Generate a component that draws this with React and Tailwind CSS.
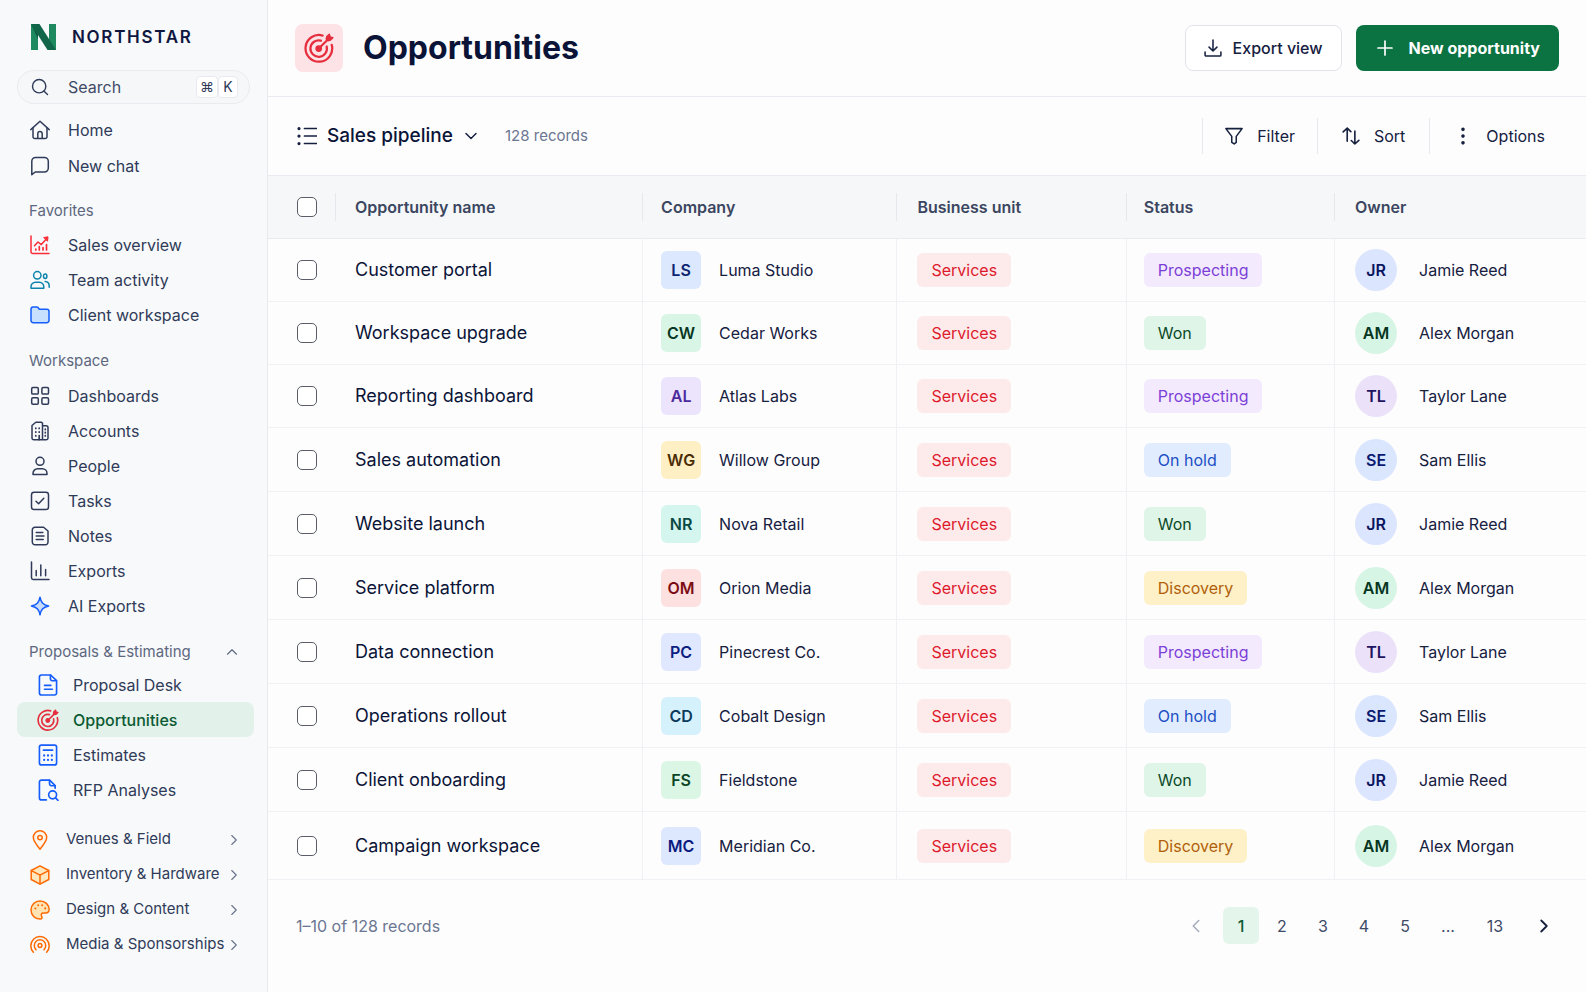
import { useState } from 'react';
import { ChevronDown, ChevronLeft, ChevronRight, ChevronUp, Plus, Search } from 'lucide-react';

const Icon = ({ size = 20, className = '', children }) => (
  <svg
    width={size}
    height={size}
    viewBox="0 0 20 20"
    fill="none"
    stroke="currentColor"
    strokeWidth="1.5"
    strokeLinecap="round"
    strokeLinejoin="round"
    className={`shrink-0 ${className}`}
    aria-hidden="true"
  >
    {children}
  </svg>
);

const HomeIcon = () => (
  <Icon>
    <path d="M.8 9.600 10 1.200l9.200 8.400" />
    <path d="M3 8v8.700a1.800 1.800 0 0 0 1.800 1.800h10.400a1.800 1.800 0 0 0 1.800-1.800V8" />
    <path d="M7.800 18.300v-4.600a2.200 2.200 0 0 1 4.400 0v4.600" />
  </Icon>
);

const ChatIcon = () => (
  <Icon>
    <path d="M5.600 1.400h8.800a3.900 3.900 0 0 1 3.900 3.900v6.800a3.900 3.900 0 0 1-3.900 3.900H5.200l-3.400 2.700V5.300a3.900 3.900 0 0 1 3.800-3.900z" />
  </Icon>
);

const SalesIcon = () => (
  <Icon className="text-red-500">
    <path d="M1 1v15.700a1.800 1.800 0 0 0 1.800 1.800H19" />
    <path d="M4.500 10.800 8 7l3.300 2.600 5.500-6" />
    <path d="M14 2.500 18 1.800 17.600 5.800z" fill="currentColor" strokeWidth="1" />
    <path d="M5.800 15v-1M9.300 15v-3.500M13 15v-2.500M16.500 15V9.500" strokeWidth="1.700" />
  </Icon>
);

const TeamIcon = () => (
  <Icon className="text-[#0e84ad]">
    <circle cx="7.300" cy="5.300" r="3.700" />
    <path d="M1 18.200v-1.500a4.500 4.500 0 0 1 4.500-4.500h3.800a4.500 4.500 0 0 1 4.500 4.500v1.500z" />
    <ellipse cx="15.200" cy="6.300" rx="1.700" ry="2.200" />
    <path d="M15.200 11.500c2.500.3 4 1.900 4 4.300v1.400" />
  </Icon>
);

const FolderIcon = () => (
  <Icon className="text-blue-600">
    <path d="M1 4.200a2.200 2.200 0 0 1 2.200-2.200h3.500c.8 0 1.300.4 1.700 1l.9 1.300h7.500A2.200 2.200 0 0 1 19 6.500v9a2.200 2.200 0 0 1-2.200 2.200H3.200A2.200 2.200 0 0 1 1 15.500z" fill="#c7e0fe" />
  </Icon>
);

const GridIcon = () => (
  <Icon>
    <rect x="1.700" y="1.500" width="6.600" height="6.600" rx="1.200" />
    <rect x="11.900" y="1.500" width="6.600" height="6.600" rx="1.200" />
    <rect x="1.700" y="11.700" width="6.600" height="6.600" rx="1.200" />
    <rect x="11.900" y="11.700" width="6.600" height="6.600" rx="1.200" />
  </Icon>
);

const BuildingIcon = () => (
  <Icon>
    <path d="M12.500 18.700V2.200l-1.300-1H5.800L2 4.500v12.400a1.800 1.800 0 0 0 1.800 1.800h12.400a1.800 1.800 0 0 0 1.800-1.800V6.700a2 2 0 0 0-2-2h-3.500" />
    <path d="M5.800 7v.4M9.200 7v.4M5.800 10.800v.4M9.200 10.800v.4M5.800 14.600v.4M9.200 14.600v4M15.300 8.200v.4M15.300 11.400v.4M15.300 14.600v.4" strokeWidth="1.700" />
  </Icon>
);

const PersonIcon = () => (
  <Icon>
    <circle cx="10" cy="5.300" r="4" />
    <path d="M3 18.600v-1.200a4.600 4.600 0 0 1 4.600-4.600h4.800a4.600 4.600 0 0 1 4.600 4.600v1.200z" />
  </Icon>
);

const TaskIcon = () => (
  <Icon>
    <rect x="1.500" y="1.200" width="17" height="17.400" rx="2.600" />
    <path d="m6 10.200 2.600 2.600 5.200-5.600" />
  </Icon>
);

const NoteIcon = () => (
  <Icon>
    <path d="M5 1.200h8.600L18 5v11a2.600 2.600 0 0 1-2.600 2.700H5A2.700 2.700 0 0 1 2.300 16V3.900A2.700 2.700 0 0 1 5 1.200z" />
    <path d="M6.200 6.600h6.600M6.200 10h7.800M6.200 13.500h7" />
  </Icon>
);

const BarsIcon = () => (
  <Icon>
    <path d="M1.500 1v15.800a1.600 1.600 0 0 0 1.600 1.600H19" />
    <path d="M6.200 14.800V9.500M10.800 14.800V4M15.600 14.800V8.500" />
  </Icon>
);

const SparkIcon = () => (
  <Icon className="text-blue-600">
    <path d="M10 1.200c.9 5 2.800 7.400 8.600 8.800-5.800 1.400-7.700 3.800-8.600 8.800-.9-5-2.800-7.400-8.600-8.800 5.800-1.400 7.700-3.800 8.600-8.800z" fill="#c7dcfe" />
  </Icon>
);

const ProposalIcon = () => (
  <Icon size={22} className="text-blue-600">
    <path d="M4 .9h8.400L17.800 6v11.300a1.800 1.800 0 0 1-1.800 1.800H4a1.800 1.800 0 0 1-1.800-1.800V2.700A1.800 1.800 0 0 1 4 .9z" />
    <path d="M12.200 1v3.400a1.700 1.700 0 0 0 1.700 1.700h3.700" />
    <path d="M6.800 10.400h5.800M6.800 13.900h7.200" />
  </Icon>
);

const TargetIcon = ({ size = 20 }) => (
  <Icon size={size} className="text-[#e62e3e]">
    <path d="M12.400 1.700a8.900 8.900 0 1 0 6.100 6.200" />
    <path d="M11.300 5.100a5.500 5.500 0 1 0 3.800 3.900" />
    <circle cx="9.800" cy="10.400" r="1.500" fill="currentColor" />
    <path d="M10 10.200 15.800 4.500" />
    <path d="m14.800 4 .4-1.600L16.900.9l.5 1.700 1.800.5-1.500 1.600-1.600.4z" fill="currentColor" strokeWidth="1" />
  </Icon>
);

const CalculatorIcon = () => (
  <Icon size={22} className="text-blue-600">
    <rect x="2.200" y="1" width="15.600" height="18" rx="1.800" />
    <path d="M5.800 5.600h8.400" />
    <path d="M6.500 10.300v.2M10 10.300v.2M13.500 10.300v.2M6.500 14.300v.2M10 14.300v.2M13.500 14.300v.2" strokeWidth="2" />
  </Icon>
);

const FileSearchIcon = () => (
  <Icon size={22} className="text-blue-600">
    <path d="M8.500 19H4a1.800 1.800 0 0 1-1.800-1.800V2.800A1.800 1.800 0 0 1 4 1h7.500l5 5v2.500" />
    <path d="M11.400 1.200v3.200a1.700 1.700 0 0 0 1.700 1.700h3.200" />
    <circle cx="14.200" cy="14.400" r="3.600" />
    <path d="m16.900 17.200 2.200 2.200" />
  </Icon>
);

const PinIcon = () => (
  <Icon className="text-orange-500">
    <path d="M10 19.200C5.800 14 3.300 10.700 3.300 7.500a6.700 6.700 0 0 1 13.400 0c0 3.200-2.500 6.500-6.700 11.700z" fill="#fff7ed" />
    <circle cx="10" cy="7.600" r="2.200" />
  </Icon>
);

const BoxIcon = () => (
  <Icon className="text-orange-500">
    <path d="m10 .9 8.800 4.600v9L10 19.100l-8.800-4.600v-9z" fill="#ffe7bf" />
    <path d="m1.400 5.600 8.600 4.500 8.600-4.500M10 10.100v8.800" />
  </Icon>
);

const PaletteIcon = () => (
  <Icon className="text-orange-500">
    <path d="M10 .9C5 .9 1 5 1 10s4 9.100 9 9.100c2.600 0 2.300-2 1.600-3-.9-1.500 0-3.200 1.800-3.200h2.300c2 0 3.400-1.400 3.400-3.400C19.100 4.600 15 .9 10 .9z" fill="#ffe3b3" />
    <path d="M5.400 8.500v.1M8.200 5.200v.1M12.200 5.200v.1M15.200 8.300v.1" strokeWidth="2" />
  </Icon>
);

const MediaIcon = () => (
  <Icon className="text-orange-500">
    <path d="M3.400 17.200a9.200 9.200 0 1 1 13.200 0" />
    <path d="M6 14.600a5.700 5.700 0 1 1 8 0" />
    <circle cx="10" cy="10.500" r="1.900" />
  </Icon>
);

const ExportIcon = () => (
  <Icon size={18}>
    <path d="M10 1v12M5.600 9 10 13.300 14.400 9M1.200 14.500v3.200A1.200 1.200 0 0 0 2.400 18.900h15.200a1.200 1.200 0 0 0 1.200-1.200v-3.200" strokeWidth="1.700" />
  </Icon>
);

const FilterIcon = () => (
  <Icon size={18}>
    <path d="M1 1.800h18l-6.500 8.600v6.600l-2.300 1.800-2.700-1.800v-6.600z" strokeWidth="1.700" />
  </Icon>
);

const SortIcon = () => (
  <Icon size={18}>
    <path d="M5.800 15.800V1.400M1.300 5.400l4.500-4.200 4 4M14.300 4.600v14.200M10.300 15l4 3.900 4.400-4" strokeWidth="1.800" />
  </Icon>
);

const DotsIcon = () => (
  <Icon size={18}>
    <path d="M10 2.500v.1M10 10v.1M10 17.500v.1" strokeWidth="4" />
  </Icon>
);

const ListIcon = () => (
  <Icon>
    <path d="M7.500 2.500h12M7.500 10h12M7.500 17.500h12" strokeWidth="1.700" />
    <path d="M2 2.500v.1M2 10v.1M2 17.500v.1" strokeWidth="3.200" />
  </Icon>
);

const Logo = () => (
  <svg width="25" height="26" viewBox="0 0 25 26" aria-hidden="true">
    <path d="M0 0h7v26H0z" fill="#1f8a5f" />
    <path d="M18 0h7v26h-7z" fill="#1f8a5f" />
    <path d="M0 0h8.500L25 26h-8.500z" fill="#11664a" />
    <path d="M0 0l7 11v4z" fill="#0c5840" />
  </svg>
);

const mainLinks = [
  { label: 'Home', icon: <HomeIcon /> },
  { label: 'New chat', icon: <ChatIcon /> },
];

const favorites = [
  { label: 'Sales overview', icon: <SalesIcon /> },
  { label: 'Team activity', icon: <TeamIcon /> },
  { label: 'Client workspace', icon: <FolderIcon /> },
];

const workspace = [
  { label: 'Dashboards', icon: <GridIcon /> },
  { label: 'Accounts', icon: <BuildingIcon /> },
  { label: 'People', icon: <PersonIcon /> },
  { label: 'Tasks', icon: <TaskIcon /> },
  { label: 'Notes', icon: <NoteIcon /> },
  { label: 'Exports', icon: <BarsIcon /> },
  { label: 'AI Exports', icon: <SparkIcon /> },
];

const proposals = [
  { label: 'Proposal Desk', icon: <ProposalIcon /> },
  { label: 'Opportunities', icon: <TargetIcon size={22} />, active: true },
  { label: 'Estimates', icon: <CalculatorIcon /> },
  { label: 'RFP Analyses', icon: <FileSearchIcon /> },
];

const groups = [
  { label: 'Venues & Field', icon: <PinIcon /> },
  { label: 'Inventory & Hardware', icon: <BoxIcon /> },
  { label: 'Design & Content', icon: <PaletteIcon /> },
  { label: 'Media & Sponsorships', icon: <MediaIcon /> },
];

const owners = {
  JR: { name: 'Jamie Reed', style: 'bg-[#dbe5fd] text-[#0b1560]' },
  AM: { name: 'Alex Morgan', style: 'bg-[#d7f5e5] text-[#06361f]' },
  TL: { name: 'Taylor Lane', style: 'bg-[#ebe2fa] text-[#1e1460]' },
  SE: { name: 'Sam Ellis', style: 'bg-[#d9e6fe] text-[#0b1a70]' },
};

const statusStyles = {
  Prospecting: 'bg-[#f3eafe] text-[#7c3fd6]',
  Won: 'bg-[#dff5e8] text-[#0b4a28]',
  'On hold': 'bg-[#e1ecfe] text-[#1d4fc4]',
  Discovery: 'bg-[#fef0c7] text-[#b0600b]',
};

const rows = [
  { name: 'Customer portal', code: 'LS', company: 'Luma Studio', tile: 'bg-[#dbe8fe] text-[#0d2470]', status: 'Prospecting', owner: 'JR' },
  { name: 'Workspace upgrade', code: 'CW', company: 'Cedar Works', tile: 'bg-[#d8f5e5] text-[#06361f]', status: 'Won', owner: 'AM' },
  { name: 'Reporting dashboard', code: 'AL', company: 'Atlas Labs', tile: 'bg-[#ece4fc] text-[#4c2a9c]', status: 'Prospecting', owner: 'TL' },
  { name: 'Sales automation', code: 'WG', company: 'Willow Group', tile: 'bg-[#fef0c4] text-[#4a2c06]', status: 'On hold', owner: 'SE' },
  { name: 'Website launch', code: 'NR', company: 'Nova Retail', tile: 'bg-[#d5f6ef] text-[#0b4a44]', status: 'Won', owner: 'JR' },
  { name: 'Service platform', code: 'OM', company: 'Orion Media', tile: 'bg-[#fde0e0] text-[#7c0d14]', status: 'Discovery', owner: 'AM' },
  { name: 'Data connection', code: 'PC', company: 'Pinecrest Co.', tile: 'bg-[#dfe8fe] text-[#0d2080]', status: 'Prospecting', owner: 'TL' },
  { name: 'Operations rollout', code: 'CD', company: 'Cobalt Design', tile: 'bg-[#d5f1fc] text-[#0b3a5c]', status: 'On hold', owner: 'SE' },
  { name: 'Client onboarding', code: 'FS', company: 'Fieldstone', tile: 'bg-[#dcf6e6] text-[#0b4526]', status: 'Won', owner: 'JR' },
  { name: 'Campaign workspace', code: 'MC', company: 'Meridian Co.', tile: 'bg-[#dde7fe] text-[#0b1a80]', status: 'Discovery', owner: 'AM' },
];

const NavList = ({ items }) => (
  <ul>
    {items.map((item) => (
      <li key={item.label}>
        <a href="#" className="flex h-[35px] items-center gap-[18px] pl-[13px]">
          {item.icon}
          {item.label}
        </a>
      </li>
    ))}
  </ul>
);

const Checkbox = ({ label }) => (
  <input
    type="checkbox"
    aria-label={label}
    className="block size-5 appearance-none rounded-[5px] border-[1.5px] border-[#5a5d68] bg-white checked:bg-emerald-700"
  />
);

const Sidebar = () => (
  <aside className="w-[268px] shrink-0 border-r border-[#e8eaef] bg-[#f8f9fb] pr-[13px] pl-[17px] text-base text-[#2f3b58]">
    <div className="flex items-center gap-4 pt-[23px] pl-[14px]">
      <Logo />
      <span className="text-[17px] leading-7 font-semibold tracking-widest text-[#0f1740]">NORTHSTAR</span>
    </div>

    <label className="mt-[19px] mr-1 flex h-[34px] items-center rounded-full border border-[#e9ebf0] bg-[#f6f7f9] pr-[11px] pl-3">
      <Search size={20} strokeWidth={1.7} className="shrink-0" />
      <input
        type="text"
        placeholder="Search"
        aria-label="Search"
        className="ml-[18px] w-full min-w-0 bg-transparent outline-none placeholder:text-[#3f4b66]"
      />
      <kbd className="flex h-[22px] w-[22px] shrink-0 items-center justify-center rounded-sm border border-[#e8eaef] bg-white font-[Inter,sans-serif] text-sm">⌘</kbd>
      <kbd className="flex h-[22px] w-5 shrink-0 items-center justify-center rounded-sm border border-[#e8eaef] bg-white font-[Inter,sans-serif] text-sm">K</kbd>
    </label>

    <nav>
      <ul className="mt-2">
        {mainLinks.map((item) => (
          <li key={item.label}>
            <a href="#" className="flex h-9 items-center gap-[18px] pl-[13px]">
              {item.icon}
              {item.label}
            </a>
          </li>
        ))}
      </ul>

      <h2 className="mt-[17px] mb-[6px] pl-3 text-[15px] leading-5 text-[#5d6880]">Favorites</h2>
      <NavList items={favorites} />

      <h2 className="mt-[19px] mb-[7px] pl-3 text-[15px] leading-5 text-[#5d6880]">Workspace</h2>
      <NavList items={workspace} />

      <button className="mt-[19px] mb-[5px] flex w-full items-center justify-between pr-[13px] pl-3 text-[15px] leading-5 text-[#5d6880]">
        Proposals &amp; Estimating
        <ChevronUp size={18} strokeWidth={1.5} />
      </button>
      <ul>
        {proposals.map((item) => (
          <li key={item.label}>
            <a
              href="#"
              aria-current={item.active ? 'page' : undefined}
              className={`flex h-[35px] items-center gap-[14px] rounded-lg pl-5 ${item.active ? 'bg-[#e2f1e9] font-medium text-[#0b5a34]' : ''}`}
            >
              {item.icon}
              {item.label}
            </a>
          </li>
        ))}
      </ul>

      <ul className="mt-[15px]">
        {groups.map((item) => (
          <li key={item.label}>
            <button className="flex h-[35px] w-full items-center pr-[11px] pl-[13px] text-[15px]">
              {item.icon}
              <span className="ml-4 grow text-left whitespace-nowrap">{item.label}</span>
              <ChevronRight size={18} strokeWidth={1.5} className="shrink-0 text-[#68738a]" />
            </button>
          </li>
        ))}
      </ul>
    </nav>
  </aside>
);

const App = () => {
  const [page, setPage] = useState(1);

  return (
    <div className="flex min-h-screen bg-[#fdfdfe] font-[Inter,sans-serif] text-[#16203f]">
      <Sidebar />

      <main className="min-w-0 grow">
        {/* Page header */}
        <header className="flex h-[97px] items-center justify-between border-b border-[#e9ebf0] pr-[27px] pl-[27px]">
          <div className="flex items-center gap-5">
            <span className="flex size-12 items-center justify-center rounded-lg bg-[#fde3e5]">
              <TargetIcon size={30} />
            </span>
            <h1 className="text-[32px] font-bold text-[#0b1437]">Opportunities</h1>
          </div>
          <div className="flex gap-[14px]">
            <button className="flex h-[46px] items-center gap-[11px] rounded-lg border border-[#e0e3ea] bg-white px-[18px] font-medium">
              <ExportIcon />
              Export view
            </button>
            <button className="flex h-[46px] items-center gap-3 rounded-lg bg-[#0b7242] pr-[19px] pl-[17px] font-bold text-white">
              <Plus size={24} strokeWidth={1.7} />
              New opportunity
            </button>
          </div>
        </header>

        {/* View toolbar */}
        <div className="flex h-[78px] items-center justify-between pr-[17px] pl-[29px]">
          <div className="flex items-center">
            <ListIcon />
            <div className="relative ml-[10px] flex items-center">
              <select aria-label="View" className="appearance-none bg-transparent pr-7 text-[19px] font-medium text-[#0b1437] outline-none">
                <option>Sales pipeline</option>
              </select>
              <ChevronDown size={20} strokeWidth={1.8} className="pointer-events-none absolute right-0" />
            </div>
            <span className="ml-6 text-[15px] text-[#6b7690]">128 records</span>
          </div>
          <div className="flex h-9 text-base">
            <button className="flex items-center gap-[14px] border-l border-[#e6e8ee] px-[22px]">
              <FilterIcon />
              Filter
            </button>
            <button className="flex items-center gap-[14px] border-l border-[#e6e8ee] px-6">
              <SortIcon />
              Sort
            </button>
            <button className="flex items-center gap-[14px] border-l border-[#e6e8ee] px-6">
              <DotsIcon />
              Options
            </button>
          </div>
        </div>

        <table className="w-full table-fixed border-separate border-spacing-0 text-left">
          <thead>
            <tr className="h-16 bg-[#f6f7f9] text-base text-[#3b4660] *:border-y *:border-[#e9ebf0] *:p-0 *:font-semibold">
              <th className="w-[68px]">
                <div className="flex h-7 items-center border-r border-[#e6e8ee] pl-[29px]">
                  <Checkbox label="Select all" />
                </div>
              </th>
              <th className="w-[23.3%]">
                <div className="flex h-7 items-center border-r border-[#e6e8ee] pl-[19px]">Opportunity name</div>
              </th>
              <th className="w-[19.3%]">
                <div className="flex h-7 items-center border-r border-[#e6e8ee] pl-[18px]">Company</div>
              </th>
              <th className="w-[17.4%]">
                <div className="flex h-7 items-center border-r border-[#e6e8ee] pl-5">Business unit</div>
              </th>
              <th className="w-[15.8%]">
                <div className="flex h-7 items-center border-r border-[#e6e8ee] pl-[17px]">Status</div>
              </th>
              <th>
                <div className="flex h-7 items-center pl-5">Owner</div>
              </th>
            </tr>
          </thead>
          <tbody>
            {rows.map((row) => (
              <tr key={row.name} className="h-16 *:border-b *:border-[#eff1f5] *:p-0 nth-[-n+3]:h-[63px] last:h-[68px]">
                <td>
                  <div className="pl-[29px]">
                    <Checkbox label={`Select ${row.name}`} />
                  </div>
                </td>
                <td className="border-r">
                  <div className="pl-[19px] text-lg text-[#0b1437]">{row.name}</div>
                </td>
                <td className="border-r">
                  <div className="flex items-center gap-[18px] pl-[18px]">
                    <span className={`flex h-[38px] w-10 items-center justify-center rounded-md font-semibold ${row.tile}`}>{row.code}</span>
                    {row.company}
                  </div>
                </td>
                <td className="border-r">
                  <div className="flex pl-5">
                    <span className="flex h-[34px] items-center rounded-md bg-[#fdeaeb] px-[14px] text-[#dd1a2b]">Services</span>
                  </div>
                </td>
                <td className="border-r">
                  <div className="flex pl-[17px]">
                    <span className={`flex h-[34px] items-center rounded-md px-[14px] ${statusStyles[row.status]}`}>{row.status}</span>
                  </div>
                </td>
                <td>
                  <div className="flex items-center gap-[22px] pl-5">
                    <span className={`flex size-[42px] items-center justify-center rounded-full font-semibold ${owners[row.owner].style}`}>{row.owner}</span>
                    {owners[row.owner].name}
                  </div>
                </td>
              </tr>
            ))}
          </tbody>
        </table>

        {/* Pagination */}
        <footer className="flex items-center justify-between pt-[27px] pr-6 pb-12 pl-7">
          <p className="text-base text-[#6b7690]">1–10 of 128 records</p>
          <div className="flex items-center gap-[5px] text-[#3f4b66]">
            <button aria-label="Previous page" className="mr-1 flex size-9 items-center justify-center text-[#a3abbb]">
              <ChevronLeft size={22} strokeWidth={1.6} />
            </button>
            {[1, 2, 3, 4, 5].map((n) => (
              <button
                key={n}
                onClick={() => setPage(n)}
                className={`h-[37px] w-9 rounded-md ${n === page ? 'bg-[#e4f5ec] font-medium text-[#0b5a34]' : ''}`}
              >
                {n}
              </button>
            ))}
            <span className="w-10 text-center">...</span>
            <button className="h-[37px] w-11">13</button>
            <button aria-label="Next page" className="ml-1 flex size-9 items-center justify-center text-[#16203f]">
              <ChevronRight size={22} strokeWidth={2} />
            </button>
          </div>
        </footer>
      </main>
    </div>
  );
};

export default App;
